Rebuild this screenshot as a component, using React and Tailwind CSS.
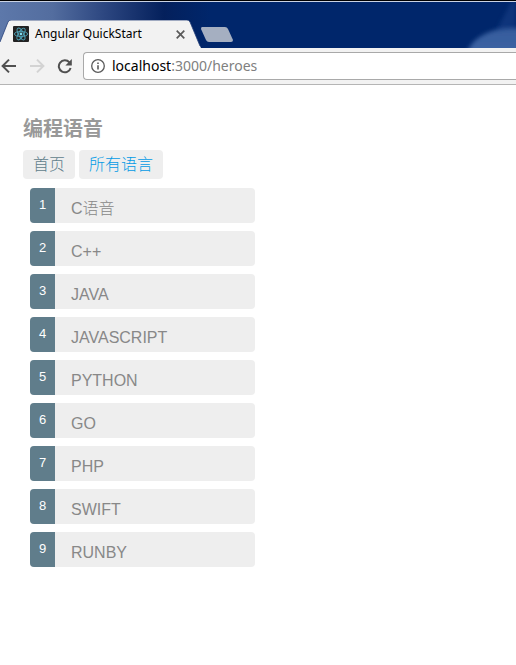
import React from "react";

const languages = ["C语音", "C++", "JAVA", "JAVASCRIPT", "PYTHON", "GO", "PHP", "SWIFT", "RUNBY"];

function ReactLogo() {
  return (
    <svg className="h-4 w-4 shrink-0" viewBox="0 0 16 16" fill="none" aria-hidden="true">
      <rect width="16" height="16" rx="1" fill="#222" />
      <g stroke="#4fa3b8" strokeWidth="0.9">
        <ellipse cx="8" cy="8" rx="6.6" ry="2.6" />
        <ellipse cx="8" cy="8" rx="6.6" ry="2.6" transform="rotate(60 8 8)" />
        <ellipse cx="8" cy="8" rx="6.6" ry="2.6" transform="rotate(120 8 8)" />
      </g>
      <circle cx="8" cy="8" r="1.4" fill="#7fdcf0" />
    </svg>
  );
}

function TabStrip() {
  return (
    <div className="relative flex h-12 items-end overflow-hidden border-t border-black bg-[#00266b]">
      <svg className="absolute inset-0 h-full w-full" aria-hidden="true">
        <defs>
          <linearGradient id="glow" x1="0" y1="0" x2="1" y2="0">
            <stop offset="0" stopColor="#5d78aa" />
            <stop offset="0.25" stopColor="#536d9f" />
            <stop offset="0.5" stopColor="#2c4680" />
            <stop offset="0.78" stopColor="#04205c" />
            <stop offset="1" stopColor="#00266b" />
          </linearGradient>
          <linearGradient id="orb" x1="0" y1="0" x2="0" y2="1">
            <stop offset="0" stopColor="#355b9c" />
            <stop offset="1" stopColor="#4a72b0" />
          </linearGradient>
          <filter id="soft">
            <feGaussianBlur stdDeviation="2" />
          </filter>
        </defs>
        <rect width="210" height="48" fill="url(#glow)" />
        <path d="M512 0h4v30h-20z" fill="#1c438b" opacity="0.5" filter="url(#soft)" />
        <ellipse cx="512" cy="58" rx="46" ry="31" fill="url(#orb)" filter="url(#soft)" />
        <rect width="100%" height="1" fill="#c9d2e3" />
      </svg>
      <div className="relative flex h-7 w-[201px] items-center pl-[13px]">
        <svg className="absolute inset-0 h-full w-full" viewBox="0 0 201 28" aria-hidden="true">
          <path d="M0 22 8 2Q9 0 11 0H187Q189 0 190 2L200 26 201 28H0Z" fill="#f2f2f2" />
          <path d="M0 22 8 2Q9 0 11 0H187Q189 0 190 2L200 26" fill="none" stroke="#26407a" strokeWidth="0.8" />
        </svg>
        <div className="relative flex items-center gap-1.5">
          <ReactLogo />
          <span className="w-[133px] whitespace-nowrap text-[12px] leading-4 text-black">Angular QuickStart</span>
          <button type="button" aria-label="Close tab" className="flex h-3 w-3 items-center justify-center">
            <svg className="h-[9px] w-[9px]" viewBox="0 0 9 9" stroke="#5a5a5a" strokeWidth="1.7" aria-hidden="true">
              <path d="M.7.7 8.3 8.3M8.3.7.7 8.3" />
            </svg>
          </button>
        </div>
      </div>
      <button type="button" aria-label="New tab" className="relative flex h-[21px] w-8 items-start">
        <svg className="h-[15px] w-8" viewBox="0 0 32 15" aria-hidden="true">
          <path d="M1 0H24Q26 0 27 2L32 13Q32 15 30 15H8Q6 15 5 13L0 2Q0 0 1 0Z" fill="#a5afc1" />
        </svg>
      </button>
    </div>
  );
}

function Toolbar() {
  return (
    <div className="flex h-[37px] items-center border-b border-[#b5b5b5] bg-[#f2f2f2]">
      <button type="button" aria-label="Back" className="w-7">
        <svg className="h-4 w-4" viewBox="0 0 16 16" fill="none" stroke="#505050" strokeWidth="2" aria-hidden="true">
          <path d="M16 8H3M9 1.6 2.6 8 9 14.4" />
        </svg>
      </button>
      <button type="button" aria-label="Forward" className="w-7">
        <svg className="ml-0.5 h-4 w-4" viewBox="0 0 16 16" fill="none" stroke="#d3d3d3" strokeWidth="2" aria-hidden="true">
          <path d="M0 8H13M7 1.6 13.4 8 7 14.4" />
        </svg>
      </button>
      <button type="button" aria-label="Reload" className="w-[27px]">
        <svg className="h-4 w-4" viewBox="0 0 16 16" fill="none" aria-hidden="true">
          <path d="M13.4 4.4A6 6 0 1 0 14.6 10" stroke="#505050" strokeWidth="2" />
          <path d="M15.8 1V7.4H9.4Z" fill="#505050" />
        </svg>
      </button>
      <div className="flex h-7 min-w-0 flex-1 items-center gap-[7px] rounded-l-sm border border-r-0 border-[#a9a9a9] bg-white pl-[7px]">
        <svg className="h-[14px] w-[14px] shrink-0" viewBox="0 0 14 14" fill="none" stroke="#5a5a5a" aria-hidden="true">
          <circle cx="7" cy="7" r="6.3" strokeWidth="1.3" />
          <path d="M7 6.2V10.4M7 3.5V5" strokeWidth="1.6" />
        </svg>
        <a href="#heroes" className="whitespace-nowrap text-[14px] leading-5 text-[#808080]">
          <span className="text-black">localhost</span>:3000/heroes
        </a>
      </div>
    </div>
  );
}

export default function App() {
  return (
    <div className="min-h-screen bg-white">
      <header className="font-['Noto_Sans','Noto_Sans_CJK_SC',sans-serif]">
        <TabStrip />
        <Toolbar />
      </header>
      <main className="px-[23px] pt-[30px] font-['Liberation_Sans','Noto_Sans_CJK_SC',sans-serif]">
        <h1 className="text-[20px] font-bold leading-7 text-[#999]">编程语音</h1>
        <nav className="mt-[7px] flex gap-1 text-[16px] font-light leading-[29px]">
          <a href="#home" className="rounded bg-[#eee] px-[10px] text-[#607d8b]">首页</a>
          <a href="#languages" className="rounded bg-[#eee] px-[10px] text-[#039be5]">所有语言</a>
        </nav>
        <ul className="ml-[7px] mt-[9px] flex w-[225px] flex-col gap-2 font-light">
          {languages.map((name, index) => (
            <li key={name}>
              <button type="button" className="flex h-[35px] w-full overflow-hidden rounded bg-[#eee] text-left">
                <span className="h-full w-[25px] bg-[#607d8b] text-center text-[13px] leading-[34px] text-white">{index + 1}</span>
                <span className="pl-4 pt-[9px] text-[16px] leading-6 text-[#888]">{name}</span>
              </button>
            </li>
          ))}
        </ul>
      </main>
    </div>
  );
}
